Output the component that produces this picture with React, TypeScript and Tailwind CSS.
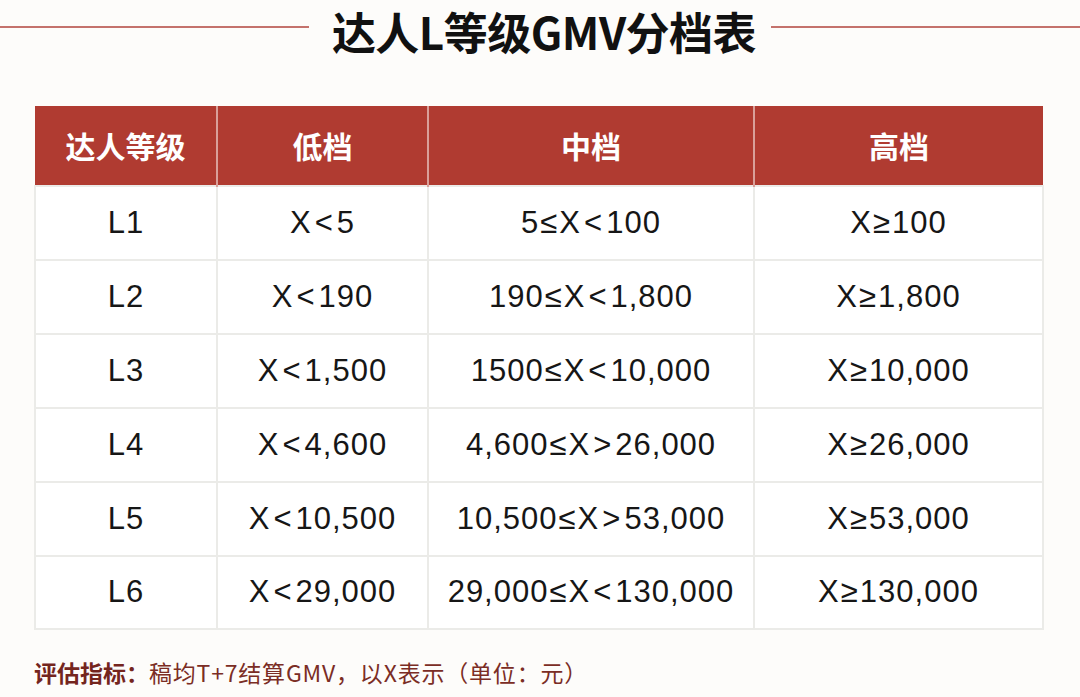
import React from 'react';

const rows = [
  { level: 'L1', low: 'X<5', mid: '5≤X<100', high: 'X≥100' },
  { level: 'L2', low: 'X<190', mid: '190≤X<1,800', high: 'X≥1,800' },
  { level: 'L3', low: 'X<1,500', mid: '1500≤X<10,000', high: 'X≥10,000' },
  { level: 'L4', low: 'X<4,600', mid: '4,600≤X>26,000', high: 'X≥26,000' },
  { level: 'L5', low: 'X<10,500', mid: '10,500≤X>53,000', high: 'X≥53,000' },
  { level: 'L6', low: 'X<29,000', mid: '29,000≤X<130,000', high: 'X≥130,000' },
];

const cols = ['w-[182px]', 'w-[211px]', 'w-[326px]', 'w-[289px]'];
const heads = ['达人等级', '低档', '中档', '高档'];

// comparison signs sit a bit wider in the source
const Expr: React.FC<{ text: string }> = ({ text }) => (
  <>
    {text.split(/([<>≤≥])/).map((part, i) => {
      if (part === '<' || part === '>') return <span key={i} className="mx-[3px]">{part}</span>;
      if (part === '≤' || part === '≥') return <span key={i} className="mx-[1px]">{part}</span>;
      return <span key={i}>{part}</span>;
    })}
  </>
);

const App: React.FC = () => {
  return (
    <div className="w-[1080px] h-[697px] bg-[#fdfcfa] flex flex-col overflow-hidden font-['Liberation_Sans','Noto_Sans_CJK_SC',sans-serif]">
      {/* title */}
      <div className="h-[62px] flex items-center">
        <div className="flex-1 h-[2px] bg-[#c4726c] mr-[23px] -mt-[8px]" />
        <h1 className="text-[44px] leading-[62px] font-bold text-[#111] font-['Noto_Sans_CJK_SC',sans-serif] tracking-[-0.5px]">
          达人L等级GMV分档表
        </h1>
        <div className="flex-1 h-[2px] bg-[#c4726c] ml-[15px] -mt-[8px]" />
      </div>

      {/* table */}
      <div className="ml-[34px] mt-[44px] w-[1008px]">
        <table className="border-collapse table-fixed w-full">
          <thead>
            <tr className="h-[80px] bg-[#b03b31]">
              {heads.map((h, i) => (
                <th
                  key={h}
                  className={`${cols[i]} text-white text-[30px] font-bold font-['Noto_Sans_CJK_SC',sans-serif] ${i > 0 ? 'border-l-2 border-[#d9a09a]' : ''}`}
                >
                  {h}
                </th>
              ))}
            </tr>
          </thead>
          <tbody>
            {rows.map((r, idx) => (
              <tr key={r.level} className={idx === 5 ? 'h-[73px]' : 'h-[74px]'}>
                {[r.level, r.low, r.mid, r.high].map((v, i) => (
                  <td
                    key={i}
                    className="border-2 border-[#ebebe8] text-center text-[31px] tracking-[1px] text-[#161616] bg-white"
                  >
                    <Expr text={v} />
                  </td>
                ))}
              </tr>
            ))}
          </tbody>
        </table>
      </div>

      {/* footer */}
      <div className="ml-[34px] mt-[25px] text-[23px] text-[#7b2d25] font-['Noto_Sans_CJK_SC',sans-serif]">
        <span className="font-bold text-[#74251e]">评估指标：</span>
        <span className="tracking-[0.8px]">稿均T+7结算GMV，以X表示（单位：元）</span>
      </div>
    </div>
  );
};

export default App;
